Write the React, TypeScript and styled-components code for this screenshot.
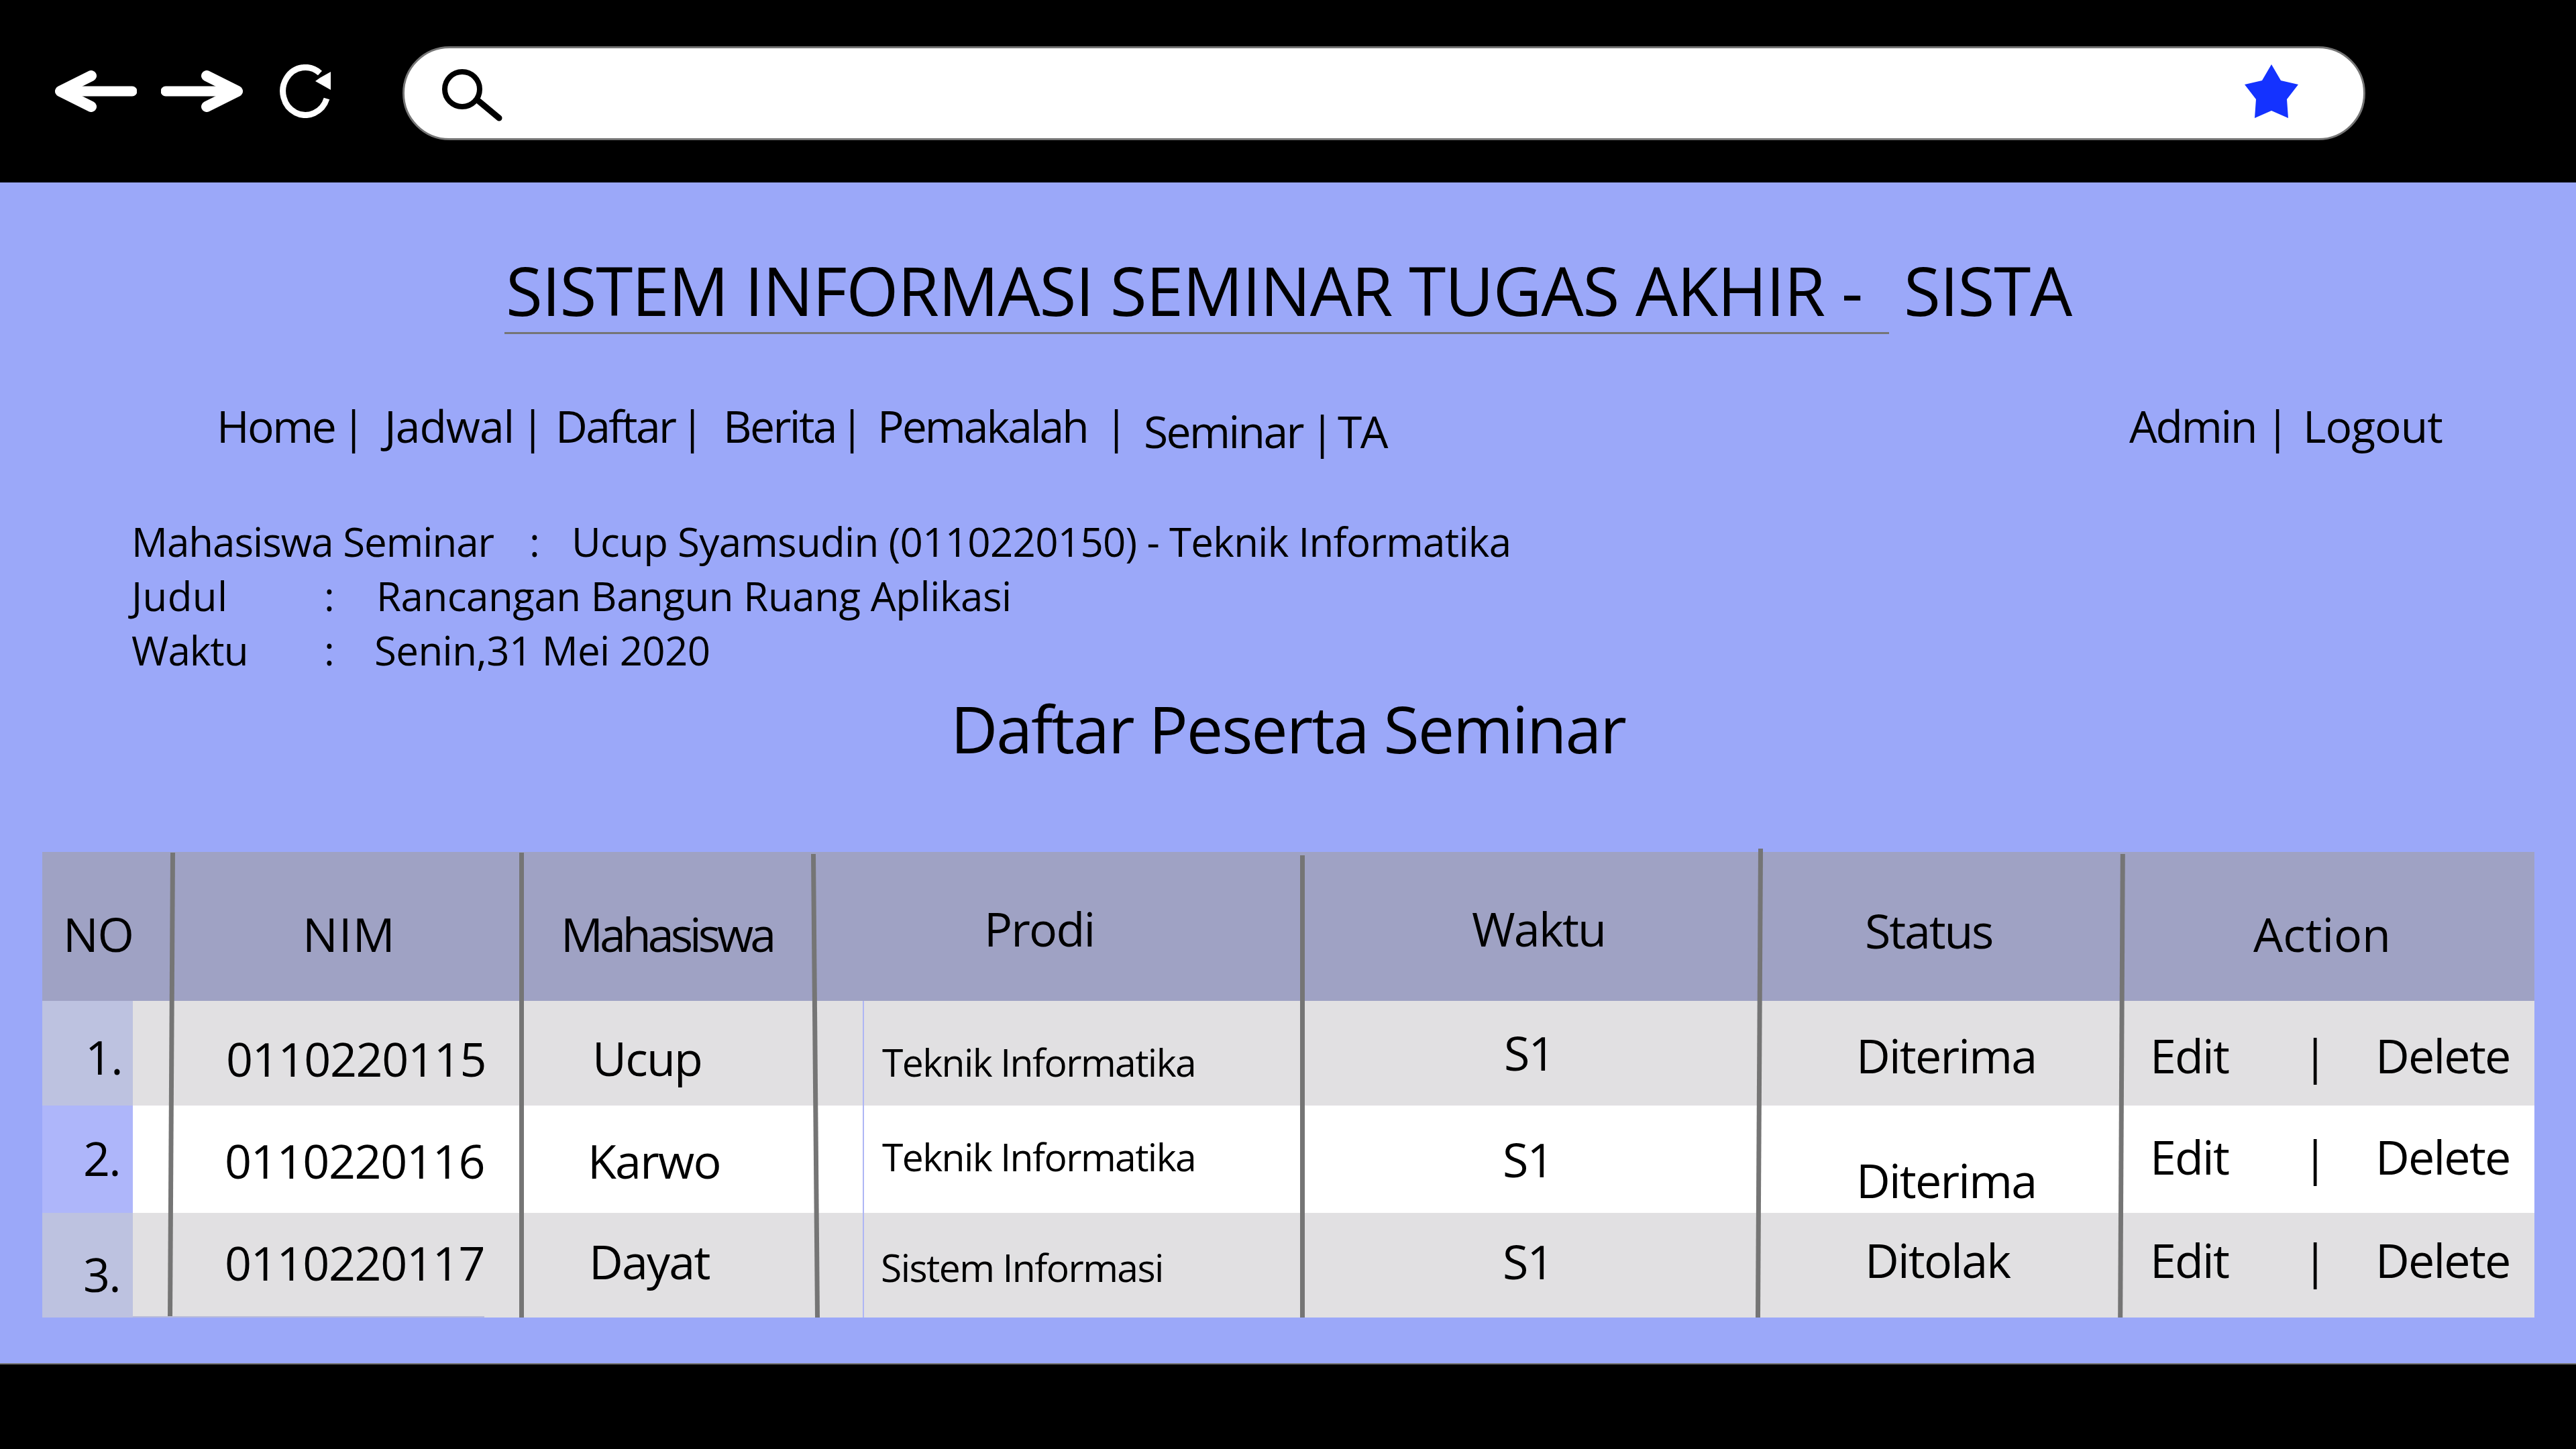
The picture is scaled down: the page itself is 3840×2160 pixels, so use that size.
import React from "react";
import styled, { createGlobalStyle } from "styled-components";

const Global = createGlobalStyle`
  html, body { margin: 0; padding: 0; background: #000; }
  body { font-family: "Open Sans", "Noto Sans", sans-serif; color: #000; }
`;

const Page = styled.div`
  width: 3840px;
  height: 2160px;
  display: flex;
  flex-direction: column;
  overflow: hidden;
`;

const TopBar = styled.header`
  height: 272px;
  flex: none;
  background: #000;
  display: flex;
  align-items: center;
  padding-left: 82px;
  box-sizing: border-box;
`;

const NavIcon = styled.svg<{ $gap: number }>`
  flex: none;
  margin-left: ${(p) => p.$gap}px;
`;

const SearchBar = styled.div`
  width: 2926px;
  height: 140px;
  margin: 6px 0 0 107px;
  box-sizing: border-box;
  background: #fff;
  border: 3px solid #757575;
  border-radius: 72px;
  display: flex;
  align-items: center;
  padding: 0 97px 0 56px;
  justify-content: space-between;
`;

const SearchGlyph = styled.svg`
  margin-top: 6px;
`;

const StarGlyph = styled.svg`
  margin-bottom: 6px;
`;

const Main = styled.main`
  flex: 1;
  background: #9ba8f9;
  display: flex;
  flex-direction: column;
  overflow: visible;
`;

const TitleRow = styled.div`
  margin: 110px 0 0 752px;
  display: flex;
  align-items: flex-start;
  font-size: 100px;
  line-height: 100px;
  letter-spacing: -1.15px;
  white-space: pre;
`;

const TitleLead = styled.h1`
  margin: 0;
  font: inherit;
  width: 2064px;
  box-sizing: border-box;
  padding: 0 0 13px 2px;
  border-bottom: 3px solid #757575;
`;

const TitleTail = styled.span`
  margin-left: 22px;
`;

const NavBar = styled.nav`
  margin: 103px 0 0 323px;
  height: 66px;
  display: flex;
  font-size: 66px;
  line-height: 66px;
`;

const NavItem = styled.a<{ $w: number; $dy?: number; $ls?: number }>`
  flex: none;
  width: ${(p) => p.$w}px;
  margin-top: ${(p) => p.$dy ?? 0}px;
  letter-spacing: ${(p) => p.$ls ?? -2.6}px;
  white-space: nowrap;
`;

const NavSpacer = styled.div<{ $w: number }>`
  flex: none;
  width: ${(p) => p.$w}px;
`;

const Info = styled.section`
  margin: 100px 0 0 196px;
  font-size: 60px;
  line-height: 81px;
`;

const InfoRow = styled.div<{ $labelW: number; $colonW: number }>`
  display: grid;
  grid-template-columns: ${(p) => p.$labelW}px ${(p) => p.$colonW}px 1fr;
  white-space: nowrap;
`;

const InfoText = styled.span<{ $ls?: number }>`
  letter-spacing: ${(p) => p.$ls ?? -0.6}px;
`;

const Heading = styled.h2`
  margin: 25px 0 0;
  padding-left: 1417px;
  font-size: 97px;
  line-height: 100px;
  font-weight: 400;
  letter-spacing: -2.1px;
  white-space: nowrap;
`;

const Table = styled.div`
  position: relative;
  margin: 135px 0 0 63px;
  width: 3715px;
  display: grid;
  grid-template-columns: 135px 57px 522px 439px 725px 681px 541px 615px;
  grid-template-rows: 222px 156px 160px 156px;
`;

const Cell = styled.div<{ $bg: string; $span?: number; $pl: number; $pt: number; $size?: number; $rule?: boolean; $ls?: number }>`
  grid-column: span ${(p) => p.$span ?? 1};
  background-color: ${(p) => p.$bg};
  ${(p) => (p.$rule ? "background-image: linear-gradient(#aeb6f5, #aeb6f5); background-repeat: no-repeat; background-position: 70px 0; background-size: 2px 100%;" : "")}
  box-sizing: border-box;
  padding: ${(p) => p.$pt}px 0 0 ${(p) => p.$pl}px;
  font-size: ${(p) => p.$size ?? 70}px;
  line-height: ${(p) => p.$size ?? 70}px;
  letter-spacing: ${(p) => p.$ls ?? -1.8}px;
  white-space: nowrap;
  overflow: visible;
`;

const Actions = styled.div`
  display: grid;
  grid-template-columns: 227px 109px auto;
`;

const Divider = styled.div<{ $left: number; $top: number; $tilt: number }>`
  position: absolute;
  left: ${(p) => p.$left}px;
  top: ${(p) => p.$top}px;
  bottom: 0;
  width: 7px;
  background: #757575;
  transform: rotate(${(p) => p.$tilt}deg);
`;

const EdgeStrip = styled.div`
  position: absolute;
  left: 135px;
  bottom: 0;
  width: 524px;
  height: 2px;
  background: #b8bbd9;
`;

const Footer = styled.footer`
  height: 128px;
  flex: none;
  box-sizing: border-box;
  background: #000;
  border-top: 2px solid #757575;
`;

const HEAD = "#9fa2c4";
const GRAY = "#e1e0e2";
const WHITE = "#ffffff";
const NO_GRAY = "#bdc2e0";
const NO_BLUE = "#aeb6fa";

const colLeft = { no: 63, fill: 198, nim: 255, mhs: 777, prodi: 1216, waktu: 1941, status: 2622, action: 3163 };
const rowTop = [1270, 1492, 1648, 1808];
const baseRatio = 0.888;

const pad = (col: number, row: number, x: number, base: number, size = 70) => ({
  $pl: x - col - 3,
  $pt: Math.round(base - rowTop[row] - size * baseRatio) + 2,
  $size: size,
});

const rows = [
  { no: "1.", noX: 130, noB: 1600, fill: GRAY, noBg: NO_GRAY, nim: "0110220115", nimX: 340, nimB: 1603, name: "Ucup", nameX: 886, nameB: 1602, prodi: "Teknik Informatika", prodiX: 1318, prodiB: 1604, s: 2245, sB: 1594, status: "Diterima", stX: 2770, stB: 1598, aB: 1598 },
  { no: "2.", noX: 127, noB: 1751, fill: WHITE, noBg: NO_BLUE, nim: "0110220116", nimX: 338, nimB: 1755, name: "Karwo", nameX: 879, nameB: 1755, prodi: "Teknik Informatika", prodiX: 1318, prodiB: 1745, s: 2243, sB: 1753, status: "Diterima", stX: 2770, stB: 1784, aB: 1749 },
  { no: "3.", noX: 127, noB: 1924, fill: GRAY, noBg: NO_GRAY, nim: "0110220117", nimX: 338, nimB: 1907, name: "Dayat", nameX: 881, nameB: 1905, prodi: "Sistem Informasi", prodiX: 1316, prodiB: 1910, s: 2243, sB: 1905, status: "Ditolak", stX: 2783, stB: 1903, aB: 1903 },
];

const dividers = [
  { left: 189, top: 1, tilt: 0.33 },
  { left: 711, top: 1, tilt: 0 },
  { left: 1149, top: 3, tilt: -0.5 },
  { left: 1875, top: 5, tilt: 0 },
  { left: 2556, top: -5, tilt: 0.33 },
  { left: 3096, top: 3, tilt: 0.3 },
];

const LeftArrow = () => (
  <NavIcon $gap={0} width={122} height={62} viewBox="0 0 122 62" fill="none" stroke="#fff" strokeLinecap="round" strokeLinejoin="round">
    <path d="M8 31H115" strokeWidth={15} />
    <path d="M54 8 8 31 54 54" strokeWidth={16} />
  </NavIcon>
);

const RightArrow = () => (
  <NavIcon $gap={36} width={122} height={62} viewBox="0 0 122 62" fill="none" stroke="#fff" strokeLinecap="round" strokeLinejoin="round">
    <path d="M114 31H7" strokeWidth={15} />
    <path d="M68 8 114 31 68 54" strokeWidth={16} />
  </NavIcon>
);

const Refresh = () => (
  <NavIcon $gap={55} width={76} height={80} viewBox="0 0 76 80" fill="none">
    <path d="M60 13A33.5 35.5 0 1 0 70 51" stroke="#fff" strokeWidth={9} />
    <path d="M76 11V38L53 25 60 20Z" fill="#fff" />
  </NavIcon>
);

const SearchIcon = () => (
  <SearchGlyph width={91} height={78} viewBox="0 0 91 78" fill="none" stroke="#000">
    <ellipse cx={30} cy={30} rx={26} ry={26} strokeWidth={8} />
    <path d="M55 48 85 73" strokeWidth={9} strokeLinecap="round" />
  </SearchGlyph>
);

const Star = () => (
  <StarGlyph width={80} height={80} viewBox="0 0 80 80">
    <path d="M40 0 54 24 80 30 63 52 65 80 40 69 15 80 17 52 0 30 26 24Z" fill="#1432ff" />
  </StarGlyph>
);

export default function App() {
  return (
    <Page>
      <Global />
      <TopBar>
        <LeftArrow />
        <RightArrow />
        <Refresh />
        <SearchBar>
          <SearchIcon />
          <Star />
        </SearchBar>
      </TopBar>
      <Main>
        <TitleRow>
          <TitleLead>SISTEM INFORMASI SEMINAR TUGAS AKHIR -</TitleLead>
          <TitleTail>SISTA</TitleTail>
        </TitleRow>
        <NavBar>
          <NavItem $w={186}>Home</NavItem>
          <NavItem $w={64}>|</NavItem>
          <NavItem $w={203} $ls={-1}>Jadwal</NavItem>
          <NavItem $w={52}>|</NavItem>
          <NavItem $w={186}>Daftar</NavItem>
          <NavItem $w={64}>|</NavItem>
          <NavItem $w={174}>Berita</NavItem>
          <NavItem $w={56}>|</NavItem>
          <NavItem $w={338} $ls={-3}>Pemakalah</NavItem>
          <NavItem $w={59}>|</NavItem>
          <NavItem $w={248} $dy={8}>Seminar</NavItem>
          <NavItem $w={41} $dy={8}>|</NavItem>
          <NavItem $w={90} $dy={8}>TA</NavItem>
          <NavSpacer $w={1090} />
          <NavItem $w={203} $ls={-2.2}>Admin</NavItem>
          <NavItem $w={56}>|</NavItem>
          <NavItem $w={220} $ls={-1}>Logout</NavItem>
        </NavBar>
        <Info>
          <InfoRow $labelW={593} $colonW={63}>
            <InfoText $ls={-1}>Mahasiswa Seminar</InfoText>
            <InfoText>:</InfoText>
            <InfoText $ls={-0.7}>Ucup Syamsudin (0110220150) - Teknik Informatika</InfoText>
          </InfoRow>
          <InfoRow $labelW={287} $colonW={78}>
            <InfoText $ls={0.4}>Judul</InfoText>
            <InfoText>:</InfoText>
            <InfoText $ls={-0.45}>Rancangan Bangun Ruang Aplikasi</InfoText>
          </InfoRow>
          <InfoRow $labelW={287} $colonW={75}>
            <InfoText $ls={-1}>Waktu</InfoText>
            <InfoText>:</InfoText>
            <InfoText>Senin,31 Mei 2020</InfoText>
          </InfoRow>
        </Info>
        <Heading>Daftar Peserta Seminar</Heading>
        <Table>
          <Cell $bg={HEAD} $span={2} {...pad(colLeft.no, 0, 97, 1417)} $ls={-1.2}>NO</Cell>
          <Cell $bg={HEAD} {...pad(colLeft.nim, 0, 454, 1417)} $ls={1.3}>NIM</Cell>
          <Cell $bg={HEAD} {...pad(colLeft.mhs, 0, 839, 1417)} $ls={-5}>Mahasiswa</Cell>
          <Cell $bg={HEAD} {...pad(colLeft.prodi, 0, 1470, 1409)}>Prodi</Cell>
          <Cell $bg={HEAD} {...pad(colLeft.waktu, 0, 2197, 1409)}>Waktu</Cell>
          <Cell $bg={HEAD} {...pad(colLeft.status, 0, 2783, 1412)} $ls={-2.2}>Status</Cell>
          <Cell $bg={HEAD} {...pad(colLeft.action, 0, 3362, 1417)} $ls={-0.1}>Action</Cell>
          {rows.map((r, i) => (
            <React.Fragment key={r.no}>
              <Cell $bg={r.noBg} {...pad(colLeft.no, i + 1, r.noX, r.noB)}>{r.no}</Cell>
              <Cell $bg={r.fill} $pl={0} $pt={0} />
              <Cell $bg={r.fill} {...pad(colLeft.nim, i + 1, r.nimX, r.nimB)} $ls={-1.3}>{r.nim}</Cell>
              <Cell $bg={r.fill} {...pad(colLeft.mhs, i + 1, r.nameX, r.nameB)}>{r.name}</Cell>
              <Cell $bg={r.fill} $rule {...pad(colLeft.prodi, i + 1, r.prodiX, r.prodiB, 57)} $ls={-1.6}>{r.prodi}</Cell>
              <Cell $bg={r.fill} {...pad(colLeft.waktu, i + 1, r.s, r.sB)}>S1</Cell>
              <Cell $bg={r.fill} {...pad(colLeft.status, i + 1, r.stX, r.stB)}>{r.status}</Cell>
              <Cell $bg={r.fill} {...pad(colLeft.action, i + 1, 3208, r.aB)}>
                <Actions>
                  <span>Edit</span>
                  <span>|</span>
                  <span>Delete</span>
                </Actions>
              </Cell>
            </React.Fragment>
          ))}
          {dividers.map((d) => (
            <Divider key={d.left} $left={d.left} $top={d.top} $tilt={d.tilt} />
          ))}
          <EdgeStrip />
        </Table>
      </Main>
      <Footer />
    </Page>
  );
}
